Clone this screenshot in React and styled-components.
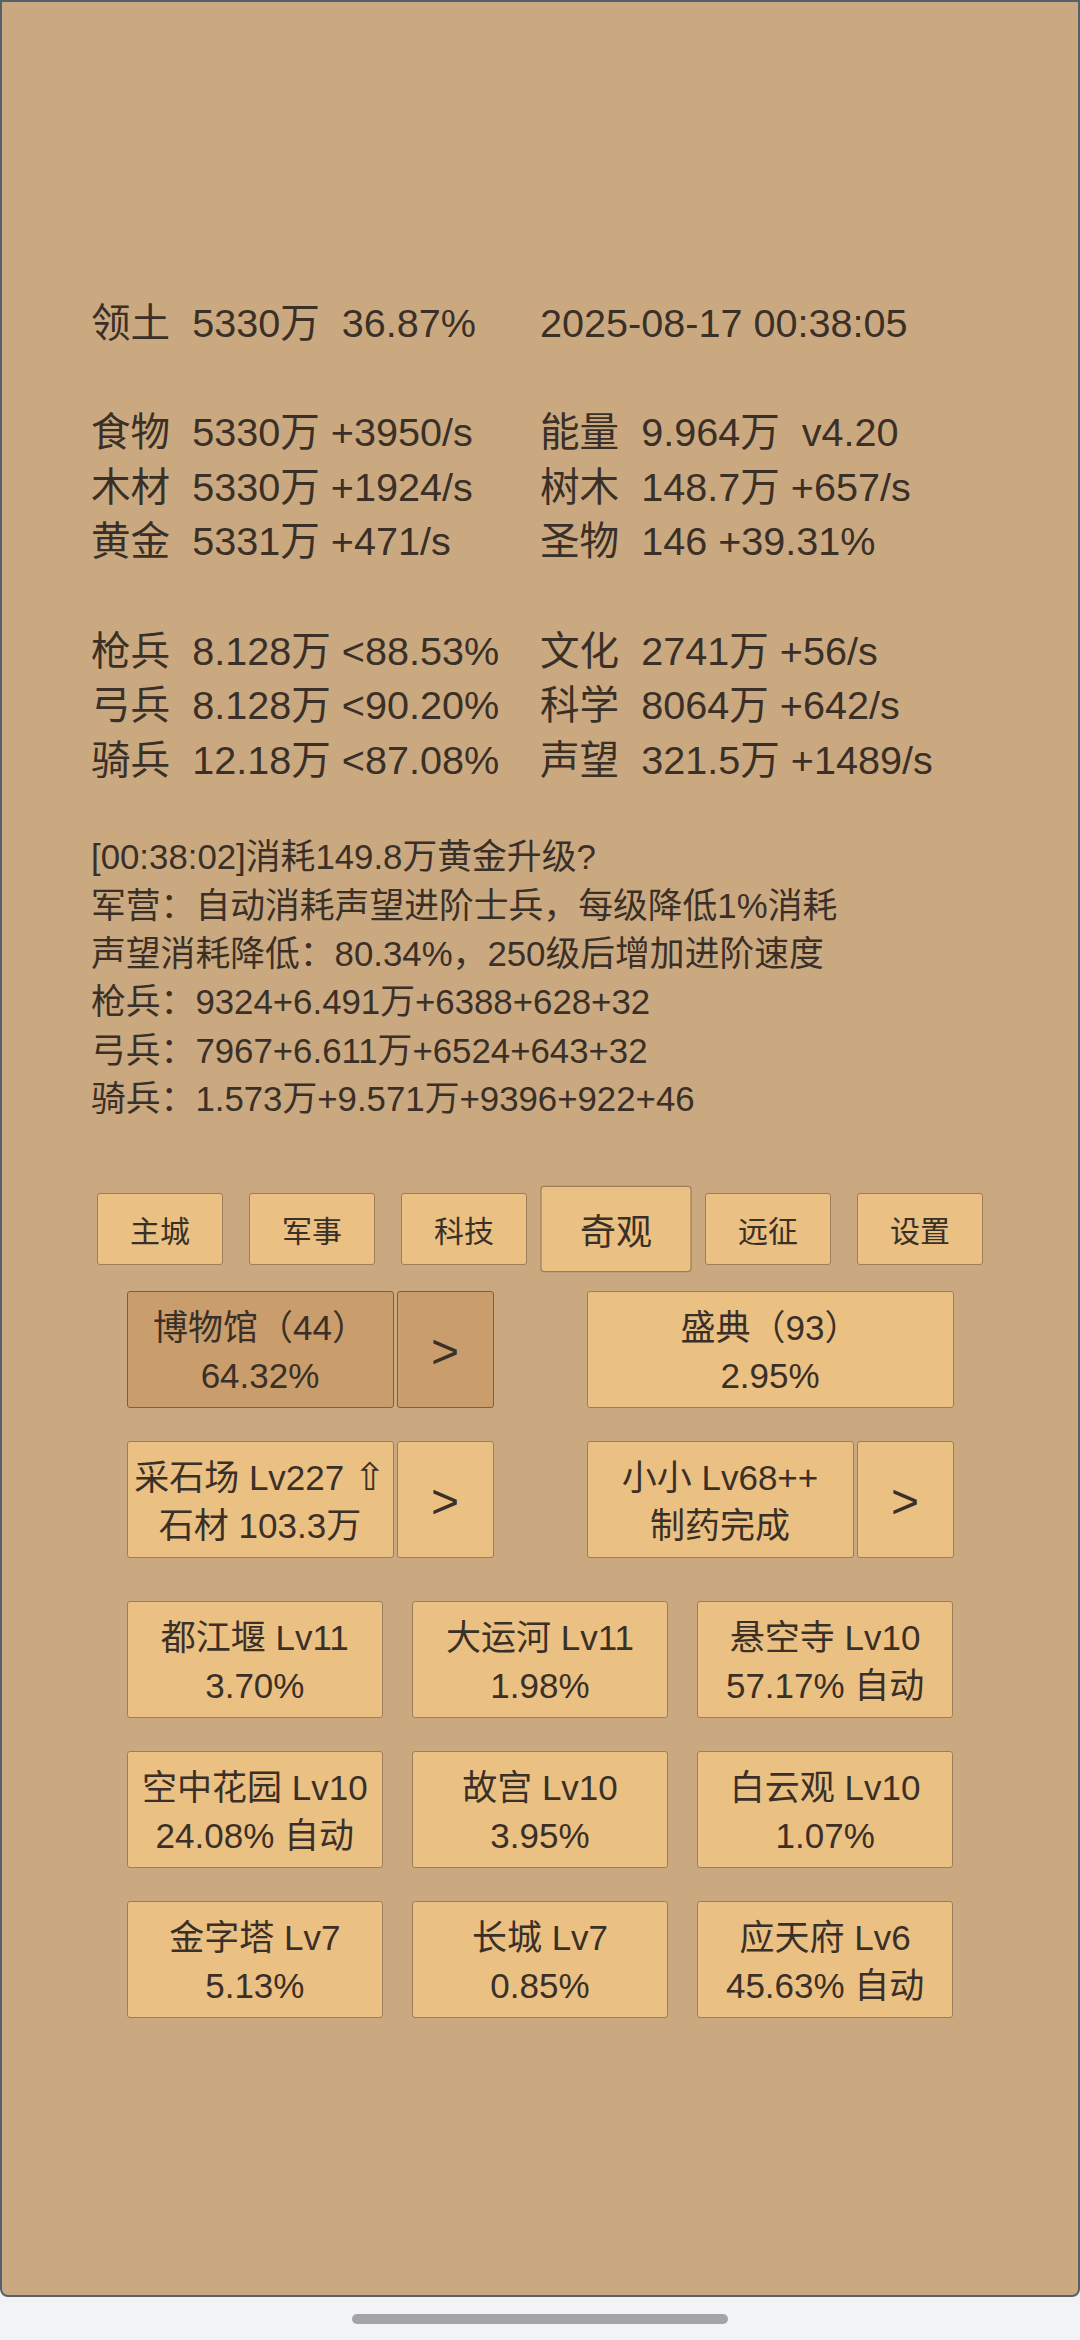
import React from 'react';
import styled, { createGlobalStyle } from 'styled-components';

const ink = '#3a3027';
const tan = '#caa981';
const paper = '#ebc083';
const paperDark = '#c99d6c';
const edge = '#9c7f5a';
const edgeDark = '#7d5f40';
const font = '"Liberation Sans", Arial, "Noto Sans CJK SC", sans-serif';

const GlobalStyle = createGlobalStyle`
  html, body {
    margin: 0;
    padding: 0;
    background: #f2f3f5;
  }
  * {
    box-sizing: border-box;
  }
`;

const Screen = styled.div`
  height: 2297px;
  background: ${tan};
  border: 2px solid #56606c;
  border-radius: 0 0 8px 8px;
  padding-top: 294px;
  color: ${ink};
  font-family: ${font};
`;

const Stats = styled.div`
  padding-left: 89px;
  font-size: 39.6px;
  line-height: 54.6px;
`;

const StatRow = styled.div`
  display: grid;
  grid-template-columns: 449px auto;
  white-space: pre;
  height: 54.6px;
`;

const Log = styled.div`
  margin-top: 46px;
  padding-left: 89px;
  font-size: 34.8px;
  line-height: 48.3px;
  white-space: pre;
`;

const Tabs = styled.div`
  margin-top: 70px;
  display: flex;
  justify-content: center;
`;

const Tab = styled.div`
  width: 126px;
  height: 72px;
  margin: 0 13px;
  display: flex;
  align-items: center;
  justify-content: center;
  background: ${paper};
  border: 1px solid ${edge};
  border-radius: 3px;
  font-size: 30px;
  transform: ${(p) => (p.$active ? 'scale(1.2)' : 'none')};
`;

const Wonders = styled.div`
  width: 827px;
  margin: 26px auto 0;
`;

const PairGrid = styled.div`
  display: grid;
  grid-template-columns: 367px 367px;
  column-gap: 93px;
  row-gap: 33.5px;
`;

const Pair = styled.div`
  display: flex;
  gap: 3px;
  height: 116.5px;
`;

const Box = styled.div`
  flex: 1;
  display: flex;
  flex-direction: column;
  align-items: center;
  justify-content: center;
  padding-top: 5px;
  background: ${(p) => (p.$hot ? paperDark : paper)};
  border: 1px solid ${(p) => (p.$hot ? edgeDark : edge)};
  border-radius: 3px;
  font-size: 35px;
  line-height: 48px;
  white-space: pre;
  text-align: center;
`;

const Arrow = styled(Box)`
  flex: 0 0 97px;
  font-size: 48px;
`;

const UpMark = styled.span`
  font-family: "DejaVu Sans", sans-serif;
  font-size: 38px;
  line-height: 1;
`;

const WonderGrid = styled.div`
  margin-top: 43.5px;
  display: grid;
  grid-template-columns: repeat(3, 1fr);
  column-gap: 28.5px;
  row-gap: 33.5px;
`;

const Cell = styled(Box)`
  height: 116.5px;
`;

const HomeArea = styled.div`
  height: 43px;
  padding-top: 17px;
  display: flex;
  justify-content: center;
`;

const HomeBar = styled.div`
  width: 376px;
  height: 10px;
  border-radius: 5px;
  background: #a4a4a6;
`;

const stats = [
  ['领土  5330万  36.87%', '2025-08-17 00:38:05'],
  ['', ''],
  ['食物  5330万 +3950/s', '能量  9.964万  v4.20'],
  ['木材  5330万 +1924/s', '树木  148.7万 +657/s'],
  ['黄金  5331万 +471/s', '圣物  146 +39.31%'],
  ['', ''],
  ['枪兵  8.128万 <88.53%', '文化  2741万 +56/s'],
  ['弓兵  8.128万 <90.20%', '科学  8064万 +642/s'],
  ['骑兵  12.18万 <87.08%', '声望  321.5万 +1489/s'],
];

const logLines = [
  '[00:38:02]消耗149.8万黄金升级?',
  '军营：自动消耗声望进阶士兵，每级降低1%消耗',
  '声望消耗降低：80.34%，250级后增加进阶速度',
  '枪兵：9324+6.491万+6388+628+32',
  '弓兵：7967+6.611万+6524+643+32',
  '骑兵：1.573万+9.571万+9396+922+46',
];

const tabs = ['主城', '军事', '科技', '奇观', '远征', '设置'];

const wonders = [
  ['都江堰 Lv11', '3.70%'],
  ['大运河 Lv11', '1.98%'],
  ['悬空寺 Lv10', '57.17% 自动'],
  ['空中花园 Lv10', '24.08% 自动'],
  ['故宫 Lv10', '3.95%'],
  ['白云观 Lv10', '1.07%'],
  ['金字塔 Lv7', '5.13%'],
  ['长城 Lv7', '0.85%'],
  ['应天府 Lv6', '45.63% 自动'],
];

const App = () => {
  return (
    <>
      <GlobalStyle />
      <Screen>
        <Stats>
          {stats.map(([l, r], i) => (
            <StatRow key={i}>
              <span>{l}</span>
              <span>{r}</span>
            </StatRow>
          ))}
        </Stats>
        <Log>
          {logLines.map((t) => (
            <div key={t}>{t}</div>
          ))}
        </Log>
        <Tabs>
          {tabs.map((t) => (
            <Tab key={t} $active={t === '奇观'}>
              {t}
            </Tab>
          ))}
        </Tabs>
        <Wonders>
          <PairGrid>
            <Pair>
              <Box $hot>
                <div>博物馆（44）</div>
                <div>64.32%</div>
              </Box>
              <Arrow $hot>&gt;</Arrow>
            </Pair>
            <Pair>
              <Box>
                <div>盛典（93）</div>
                <div>2.95%</div>
              </Box>
            </Pair>
            <Pair>
              <Box>
                <div>
                  采石场 Lv227 <UpMark>⇧</UpMark>
                </div>
                <div>石材 103.3万</div>
              </Box>
              <Arrow>&gt;</Arrow>
            </Pair>
            <Pair>
              <Box>
                <div>小小 Lv68++</div>
                <div>制药完成</div>
              </Box>
              <Arrow>&gt;</Arrow>
            </Pair>
          </PairGrid>
          <WonderGrid>
            {wonders.map(([a, b]) => (
              <Cell key={a}>
                <div>{a}</div>
                <div>{b}</div>
              </Cell>
            ))}
          </WonderGrid>
        </Wonders>
      </Screen>
      <HomeArea>
        <HomeBar />
      </HomeArea>
    </>
  );
};

export default App;
